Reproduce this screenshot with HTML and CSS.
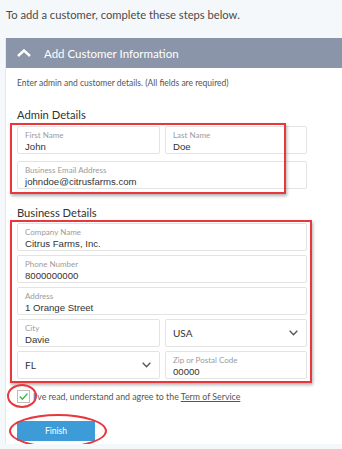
FILE: index.html
```html
<!DOCTYPE html>
<html lang="en">
<head>
  <meta charset="UTF-8">
  <title>Add Customer</title>
  <link rel="stylesheet" href="styles.css">
</head>
<body>

  <p class="intro">To add a customer, complete these steps below.</p>

  <div class="panel">
    <div class="panel-head">
      <svg class="chev-up" width="14" height="8" viewBox="0 0 14 8"><path d="M1 7 L7 1.5 L13 7" fill="none" stroke="#fff" stroke-width="2.4"/></svg>
      <span>Add Customer Information</span>
    </div>

    <div class="panel-body">
      <p class="desc">Enter admin and customer details. (All fields are required)</p>

      <!-- Admin -->
      <h2>Admin Details</h2>
      <div class="fields admin">
        <div class="mark mark-admin"></div>
        <div class="field">
          <label>First Name</label>
          <div class="value">John</div>
        </div>
        <div class="field">
          <label>Last Name</label>
          <div class="value">Doe</div>
        </div>
        <div class="field wide">
          <label>Business Email Address</label>
          <div class="value">johndoe@citrusfarms.com</div>
        </div>
      </div>

      <!-- Business -->
      <h2 class="biz-title">Business Details</h2>
      <div class="fields business">
        <div class="mark mark-biz"></div>
        <div class="field wide">
          <label>Company Name</label>
          <div class="value">Citrus Farms, Inc.</div>
        </div>
        <div class="field wide">
          <label>Phone Number</label>
          <div class="value">8000000000</div>
        </div>
        <div class="field wide">
          <label>Address</label>
          <div class="value">1 Orange Street</div>
        </div>
        <div class="field">
          <label>City</label>
          <div class="value">Davie</div>
        </div>
        <div class="field select">
          <span>USA</span>
          <svg width="9" height="6" viewBox="0 0 9 6"><path d="M0.7 0.8 L4.5 4.8 L8.3 0.8" fill="none" stroke="#555" stroke-width="1.3"/></svg>
        </div>
        <div class="field select">
          <span>FL</span>
          <svg width="9" height="6" viewBox="0 0 9 6"><path d="M0.7 0.8 L4.5 4.8 L8.3 0.8" fill="none" stroke="#555" stroke-width="1.3"/></svg>
        </div>
        <div class="field">
          <label>Zip or Postal Code</label>
          <div class="value">00000</div>
        </div>
      </div>

      <div class="agree">
        <div class="check">
          <svg width="11" height="11" viewBox="0 0 11 11"><path d="M1.8 5.6 L4.4 8.2 L9.4 2.6" fill="none" stroke="#3db54a" stroke-width="1.4"/></svg>
          <div class="ring ring-check"></div>
        </div>
        <span>I've read, understand and agree to the <a href="#">Term of Service</a></span>
      </div>

      <div class="actions">
        <button type="button">Finish</button>
        <div class="ring ring-btn"></div>
      </div>
    </div>
  </div>

</body>
</html>
```
FILE: styles.css
```css
body { margin: 0; background: #f5f8fa; font-family: Lato, "Open Sans", sans-serif; color: #444; }
.intro { margin: 0; height: 38px; box-sizing: border-box; padding: 7px 0 0 6px; font-size: 11.2px; line-height: 16px; color: #4a4a4a; }

.panel { margin-left: 5px; background: #fff; border-left: 1px solid #e4e9ee; }
.panel-head { height: 30px; display: flex; align-items: center; background: #8b95a9; color: #fff; font-size: 11.5px; }
.chev-up { margin-left: 11px; margin-right: 13px; }
.panel-body { padding: 10px 0 3px 11px; }

.desc { margin: 0; font-size: 8.5px; line-height: 11px; color: #555; }
h2 { margin: 18px 0 4px; font-size: 11.2px; font-weight: normal; line-height: 15px; color: #333; }
h2.biz-title { margin-top: 16px; margin-bottom: 3px; }

.fields { position: relative; display: grid; grid-template-columns: 143px 142px; column-gap: 5px; width: 290px; }
.fields.admin { row-gap: 7px; }
.fields.business { row-gap: 4px; }
.field { height: 28px; box-sizing: border-box; border: 1px solid #e3e3e3; border-radius: 2px; padding: 3px 7px 0; background: #fff; }
.field.wide { grid-column: span 2; }
.field label { display: block; font-size: 8px; line-height: 10px; color: #9b9b9b; }
.field .value { font-family: "Liberation Sans", Arial, sans-serif; font-size: 9.6px; line-height: 13px; color: #333; }
.field.select { display: flex; align-items: center; justify-content: space-between; padding: 0 8px 0 7px; font-size: 10px; color: #333; }

.mark { position: absolute; border: 2px solid #e8383d; box-shadow: 1px 2px 3px rgba(0,0,0,0.3); pointer-events: none; }
.mark-admin { left: -7px; top: -3px; width: 272px; height: 67px; }
.mark-biz { left: -7px; top: -3px; width: 298px; height: 159px; }

.agree { display: flex; align-items: center; margin-top: 11px; font-size: 8.8px; color: #555; }
.agree a { color: #555; }
.check { position: relative; width: 13px; height: 13px; box-sizing: border-box; border: 1px solid #bdbdbd; background: #fff; margin-right: 3px; display: flex; align-items: center; justify-content: center; }
.ring { position: absolute; border: 2px solid #e8383d; border-radius: 50%; pointer-events: none; }
.ring-check { left: -11px; top: -7px; width: 26px; height: 20px; }

.actions { position: relative; margin-top: 18px; width: 78px; }
button { display: block; width: 78px; height: 20px; border: none; border-radius: 1px; background: #3d9bd8; color: #fff; font-family: Lato, "Open Sans", sans-serif; font-size: 8.5px; padding: 0; }
.ring-btn { left: -8px; top: -7px; width: 94px; height: 30px; }
```
